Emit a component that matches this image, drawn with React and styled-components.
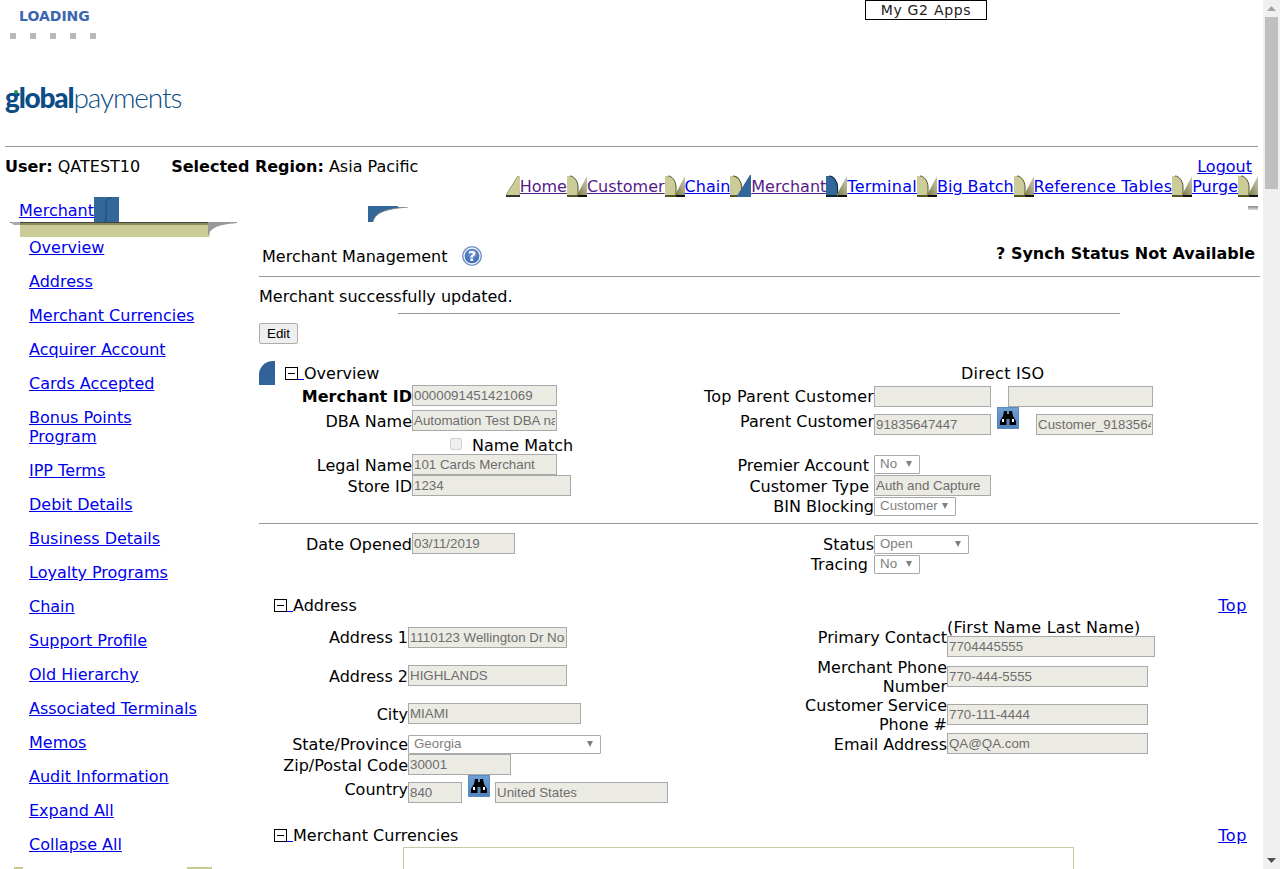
import React from 'react';
import styled, { createGlobalStyle } from 'styled-components';

const GlobalStyle = createGlobalStyle`
  html, body {
    margin: 0;
    padding: 0;
    height: 100%;
    overflow: hidden;
    background: #fff;
  }
  body {
    font-family: 'DejaVu Sans', Verdana, sans-serif;
    font-size: 16px;
    color: #000;
  }
`;

const Shell = styled.div`
  display: flex;
  width: 1280px;
  height: 869px;
  overflow: hidden;
`;

const Page = styled.div`
  width: 1263px;
  padding-left: 5px;
  box-sizing: border-box;
`;

const Scrollbar = styled.div`
  width: 17px;
  background: #f0f0f0;
  display: flex;
  flex-direction: column;
  align-items: center;
`;

const ScrollArrow = styled.div`
  height: 17px;
  width: 17px;
  display: flex;
  align-items: center;
  justify-content: center;
`;

const ScrollThumb = styled.div`
  width: 13px;
  height: 172px;
  background: #c0c0c0;
  margin-bottom: auto;
`;

const TopBar = styled.div`
  height: 85px;
  display: flex;
`;

const Loading = styled.div`
  width: 860px;
`;

const LoadingText = styled.div`
  font-size: 14px;
  font-weight: bold;
  color: #3a66b0;
  padding: 9px 0 0 14px;
  line-height: 14px;
  height: 24px;
`;

const LoadingDots = styled.div`
  display: flex;
  gap: 14px;
  padding-left: 5px;
`;

const Dot = styled.span`
  width: 6px;
  height: 6px;
  background: #b8b8b8;
`;

const AppsButton = styled.div`
  width: 122px;
  height: 20px;
  box-sizing: border-box;
  border: 1px solid #000;
  text-align: center;
  font-size: 14px;
  line-height: 19px;
  color: #222;
  letter-spacing: 0.7px;
`;

const Logo = styled.div`
  position: relative;
  height: 61px;
  font-family: 'Lato', 'Liberation Sans', sans-serif;
  font-size: 28px;
  line-height: 24px;
  color: #0b4c86;
  letter-spacing: -1.1px;
  white-space: nowrap;
`;

const LogoBold = styled.b`
  font-weight: 900;
  letter-spacing: -1.2px;
`;

const LogoLight = styled.span`
  font-weight: 300;
`;

const LogoDot = styled.span`
  position: absolute;
  left: 9px;
  top: 5px;
  width: 4px;
  height: 4px;
  border-radius: 50%;
  background: #1f9a50;
`;

const Rule = styled.div`
  height: 1px;
  background: #999;
  width: ${(p) => p.$w || 1253}px;
  margin-left: ${(p) => p.$ml || 0}px;
`;

const UserBar = styled.div`
  height: 50px;
  display: flex;
  flex-direction: column;
`;

const UserLine = styled.div`
  display: flex;
  height: 18px;
  padding-top: 10px;
  line-height: 19px;
`;

const UserInfo = styled.span`
  margin-right: ${(p) => p.$mr || 0}px;
  b { font-weight: bold; }
`;

const Logout = styled.a`
  margin-left: auto;
  margin-right: 11px;
  color: #00e;
  text-decoration: underline;
`;

const TabRow = styled.div`
  display: flex;
  justify-content: flex-end;
  height: 22px;
  line-height: 24px;
  margin-right: 5px;
`;

const TabLink = styled.a`
  color: ${(p) => (p.$visited ? '#551a8b' : '#00e')};
  text-decoration: underline;
  white-space: nowrap;
  letter-spacing: ${(p) => p.$ls || 0}px;
`;

const Columns = styled.div`
  display: flex;
`;

const Sidebar = styled.div`
  width: 254px;
  flex-shrink: 0;
`;

const SideTab = styled.div`
  display: flex;
  height: 25px;
  padding-left: 14px;
`;

const SideTabLink = styled.a`
  color: #00e;
  text-decoration: underline;
  line-height: 19px;
  padding-top: 4px;
`;

const SideBanner = styled.div`
  height: 15px;
  margin-left: 5px;
`;

const SideList = styled.div`
  padding: 1px 0 0 24px;
  display: flex;
  flex-direction: column;
  gap: 15px;
  width: 172px;
`;

const SideLink = styled.a`
  color: #00e;
  text-decoration: underline;
  line-height: 19px;
`;

const SideFoot = styled.div`
  display: flex;
  margin: 13px 0 0 9px;
`;

const FootChip = styled.span`
  width: ${(p) => p.$w}px;
  height: 3px;
  background: #c9c992;
  margin-right: ${(p) => p.$mr || 0}px;
`;

const Content = styled.div`
  width: 1002px;
`;

const ContentTop = styled.div`
  height: 24px;
  display: flex;
  padding: 9px 3px 0 109px;
  box-sizing: border-box;
  justify-content: space-between;
`;

const GreyDash = styled.span`
  width: 10px;
  height: 4px;
  background: linear-gradient(#888, #ddd);
`;

const TitleRow = styled.div`
  height: 55px;
  box-sizing: border-box;
  display: flex;
  align-items: flex-start;
  padding: 25px 6px 0 3px;
  line-height: 19px;
`;

const Title = styled.span`
  margin: 1px 14px 0 0;
`;

const SyncStatus = styled.b`
  margin: -2px 0 0 auto;
`;

const Message = styled.div`
  height: 36px;
  line-height: 39px;
`;

const EditButton = styled.button`
  display: block;
  width: 39px;
  height: 21px;
  margin: 9px 0 17px;
  padding: 0;
  border: 1px solid #adadad;
  border-radius: 2px;
  background: #efefef;
  font-family: 'Liberation Sans', Arial, sans-serif;
  font-size: 13.33px;
  color: #000;
`;

const SectionHead = styled.div`
  display: flex;
  align-items: center;
  height: ${(p) => p.$h || 24}px;
  padding-left: ${(p) => p.$pl || 0}px;
`;

const BlueCorner = styled.span`
  width: 16px;
  height: 24px;
  margin-right: 10px;
  background: linear-gradient(#2f5f96, #336699);
  border-radius: 14px 0 0 0;
`;

const MinusBox = styled.span`
  width: 11px;
  height: 11px;
  border: 1px solid #000;
  position: relative;
  flex-shrink: 0;
  &::after {
    content: '';
    position: absolute;
    left: 2px;
    right: 2px;
    top: 5px;
    height: 1px;
    background: #000;
  }
`;

const Underscore = styled.span`
  width: 6px;
  height: 13px;
  border-bottom: 1px solid #00e;
`;

const TopLink = styled.a`
  margin-left: auto;
  margin-right: 14px;
  color: #00e;
  text-decoration: underline;
  letter-spacing: 0.6px;
`;

const TwoCols = styled.div`
  display: flex;
`;

const FormCol = styled.div`
  width: ${(p) => p.$w}px;
  flex-shrink: 0;
`;

const Row = styled.div`
  display: flex;
  height: ${(p) => p.$h}px;
`;

const Label = styled.label`
  width: ${(p) => p.$w}px;
  flex-shrink: 0;
  text-align: right;
  line-height: 19px;
  padding: ${(p) => p.$pt || 0}px ${(p) => p.$pr || 0}px 0 ${(p) => p.$pl || 0}px;
  box-sizing: border-box;
  font-weight: ${(p) => (p.$bold ? 'bold' : 'normal')};
  white-space: ${(p) => (p.$wrap ? 'normal' : 'nowrap')};
  letter-spacing: ${(p) => p.$ls || 0}px;
`;

const Field = styled.input`
  display: block;
  width: ${(p) => p.$w}px;
  height: 21px;
  box-sizing: border-box;
  margin: ${(p) => p.$mt || 0}px 0 0 ${(p) => p.$ml || 0}px;
  padding: 0 1px;
  border: 1px solid #a9a9a9;
  background: #ebebe4;
  color: #6d6d6d;
  font-family: 'Liberation Sans', Arial, sans-serif;
  font-size: 13.33px;
  flex-shrink: 0;
`;

const SelectBox = styled.div`
  width: ${(p) => p.$w}px;
  height: 19px;
  box-sizing: border-box;
  margin-top: ${(p) => p.$mt || 0}px;
  padding: 0 0 2px 5px;
  border: 1px solid #a9a9a9;
  border-radius: 1px;
  background: #fff;
  color: #808080;
  font-family: 'Liberation Sans', Arial, sans-serif;
  font-size: 13.33px;
  line-height: 15px;
  display: flex;
  align-items: center;
  justify-content: space-between;
  &::after {
    content: '';
    margin-right: 7px;
    border-left: 3.5px solid transparent;
    border-right: 3.5px solid transparent;
    border-top: 6px solid #808080;
  }
`;

const Lookup = styled.span`
  width: 22px;
  height: 22px;
  margin-left: ${(p) => p.$ml || 0}px;
  flex-shrink: 0;
  background: linear-gradient(#6f9fd4, #4f84bd);
  border: 1px solid #5a8cc4;
  box-sizing: border-box;
  display: flex;
  align-items: center;
  justify-content: center;
`;

const Check = styled.span`
  width: 12px;
  height: 12px;
  margin: 5px 10px 0 38px;
  box-sizing: border-box;
  border: 1px solid #cfcfcf;
  border-radius: 2px;
  background: #efefef;
`;

const Plain = styled.span`
  line-height: 19px;
  margin-left: ${(p) => p.$ml || 0}px;
  padding-top: ${(p) => p.$pt || 0}px;
  white-space: nowrap;
  letter-spacing: ${(p) => p.$ls || 0}px;
`;

const ContactStack = styled.div`
  display: flex;
  flex-direction: column;
  padding-top: 3px;
`;

const CurrencyBox = styled.div`
  width: 671px;
  height: 60px;
  margin: 2px 0 0 144px;
  box-sizing: border-box;
  border: 1px solid #c9c9a5;
`;

const sideItems = [
  'Overview', 'Address', 'Merchant Currencies', 'Acquirer Account', 'Cards Accepted',
  'Bonus Points Program', 'IPP Terms', 'Debit Details', 'Business Details', 'Loyalty Programs',
  'Chain', 'Support Profile', 'Old Hierarchy', 'Associated Terminals', 'Memos',
  'Audit Information', 'Expand All', 'Collapse All',
];

const KHAKI = '#cccc99';
const BLUE = '#336699';

// right edge of one tab and left edge of the next
const TabEdge = ({ kind }) => {
  if (kind === 'start') {
    return (
      <svg width="14" height="22" viewBox="0 0 14 22">
        <path d="M0 20 L12 1 H14 V20 Z" fill={KHAKI} />
        <path d="M0 20 L12 1" stroke="#9a9a66" fill="none" />
        <rect y="20" width="14" height="2" fill="#333" />
      </svg>
    );
  }
  const fromActive = kind === 'fromActive';
  const toActive = kind === 'toActive';
  return (
    <svg width={fromActive || toActive ? 21 : 20} height="22" viewBox="0 0 20 22" preserveAspectRatio="none">
      <defs>
        <linearGradient id="tabFade" x1="0" y1="1" x2="1" y2="0">
          <stop offset="0" stopColor="#77773f" />
          <stop offset="0.55" stopColor="#a9a985" />
          <stop offset="1" stopColor="#c8c8b8" />
        </linearGradient>
      </defs>
      <path d="M0 1 H3 C7 1 11 6 11 12 V20 H0 Z" fill={fromActive ? BLUE : KHAKI} />
      <path d="M3 1 C7 1 11 6 11 12 V20" stroke={fromActive ? '#123' : '#55552a'} fill="none" />
      <rect y="20" width="11" height="2" fill={fromActive ? '#123' : '#55552a'} />
      {toActive ? (
        <path d="M6 22 L19 0 H20 V22 Z" fill={BLUE} />
      ) : (
        <>
          <path d="M10 20 L20 1 V20 Z" fill="url(#tabFade)" />
          <rect x="11" y="20" width="9" height="2" fill="#111" />
        </>
      )}
    </svg>
  );
};

const Binoculars = () => (
  <svg width="16" height="14" viewBox="0 0 16 14">
    <path d="M4 0 H7 V3 H9 V0 H12 L13 5 L16 10 V14 H9.5 V8 H6.5 V14 H0 V10 L3 5 Z" fill="#000" />
    <rect x="2" y="8" width="2" height="3" fill="#fff" />
    <rect x="12" y="8" width="2" height="3" fill="#fff" />
  </svg>
);

const HelpIcon = () => (
  <svg width="20" height="20" viewBox="0 0 20 20">
    <defs>
      <radialGradient id="helpFill" cx="0.5" cy="0.3" r="0.8">
        <stop offset="0" stopColor="#6f98d6" />
        <stop offset="1" stopColor="#2f5ea8" />
      </radialGradient>
    </defs>
    <circle cx="10" cy="10" r="10" fill="#6f8fc0" />
    <circle cx="10" cy="10" r="8" fill="url(#helpFill)" stroke="#eef2fa" strokeWidth="1.3" />
    <text x="10" y="15" textAnchor="middle" fontSize="14" fontWeight="bold" fontFamily="DejaVu Sans" fill="#fff">?</text>
  </svg>
);

const SideBannerArt = () => (
  <svg width="227" height="15" viewBox="0 0 227 15">
    <rect width="227" height="1" y="0" fill="#444" />
    <rect x="10" y="1" width="190" height="2" fill="#8a8a5a" />
    <rect x="10" y="3" width="190" height="12" fill={KHAKI} />
    <path d="M0 0 H10 V3 H4 Z" fill="#aaa" />
    <path d="M198 15 C200 6 206 3 227 1 V0 H198 Z" fill="#999" />
    <path d="M199 15 C201 7 208 4 227 3 V15 Z" fill="#fff" />
  </svg>
);

const App = () => (
  <Shell>
    <GlobalStyle />
    <Page>
      <TopBar>
        <Loading>
          <LoadingText>LOADING</LoadingText>
          <LoadingDots>
            <Dot /><Dot /><Dot /><Dot /><Dot />
          </LoadingDots>
        </Loading>
        <AppsButton>My G2 Apps</AppsButton>
      </TopBar>
      <Logo>
        <LogoBold>global</LogoBold><LogoLight>payments</LogoLight>
        <LogoDot />
      </Logo>
      <Rule />
      <UserBar>
        <UserLine>
          <UserInfo $mr={31}><b>User:</b> QATEST10</UserInfo>
          <UserInfo><b>Selected Region:</b> Asia Pacific</UserInfo>
          <Logout>Logout</Logout>
        </UserLine>
        <TabRow>
          <TabEdge kind="start" />
          <TabLink $visited>Home</TabLink>
          <TabEdge kind="mid" />
          <TabLink $visited>Customer</TabLink>
          <TabEdge kind="mid" />
          <TabLink>Chain</TabLink>
          <TabEdge kind="toActive" />
          <TabLink $visited>Merchant</TabLink>
          <TabEdge kind="fromActive" />
          <TabLink $ls={0.25}>Terminal</TabLink>
          <TabEdge kind="mid" />
          <TabLink>Big Batch</TabLink>
          <TabEdge kind="mid" />
          <TabLink $ls={0.2}>Reference Tables</TabLink>
          <TabEdge kind="mid" />
          <TabLink>Purge</TabLink>
          <TabEdge kind="mid" />
        </TabRow>
      </UserBar>
      <Columns>
        <Sidebar>
          <SideTab>
            <SideTabLink>Merchant</SideTabLink>
            <svg width="25" height="25" viewBox="0 0 25 25">
              <rect width="25" height="25" fill={BLUE} />
              <path d="M10 24 H12 V6 C12 2 14 1 18 1" stroke="#234a70" fill="none" />
            </svg>
          </SideTab>
          <SideBanner><SideBannerArt /></SideBanner>
          <SideList>
            {sideItems.map((item) => (
              <SideLink key={item}>{item}</SideLink>
            ))}
          </SideList>
          <SideFoot>
            <FootChip $w={9} $mr={164} />
            <FootChip $w={25} />
          </SideFoot>
        </Sidebar>
        <Content>
          <ContentTop>
            <svg width="40" height="16" viewBox="0 0 40 16">
              <rect width="40" height="16" fill={BLUE} />
              <path d="M5 16 C7 7 16 3 40 1 V16 Z" fill="#fff" />
              <path d="M5 16 C7 7 16 3 40 1" stroke="#888" fill="none" />
              <rect x="30" width="10" height="1" fill="#fff" />
            </svg>
            <GreyDash />
          </ContentTop>
          <TitleRow>
            <Title>Merchant Management</Title>
            <HelpIcon />
            <SyncStatus>? Synch Status Not Available</SyncStatus>
          </TitleRow>
          <Rule $w={1001} />
          <Message>Merchant successfully updated.</Message>
          <Rule $w={722} $ml={139} />
          <EditButton>Edit</EditButton>

          <TwoCols>
            <FormCol $w={444}>
              <SectionHead>
                <BlueCorner />
                <MinusBox />
                <Underscore />
                <span>Overview</span>
              </SectionHead>
              <Row $h={25}><Label $w={153} $bold $pt={2}>Merchant ID</Label><Field $w={145} readOnly value="0000091451421069" /></Row>
              <Row $h={23}><Label $w={153} $pt={2}>DBA Name</Label><Field $w={145} readOnly value="Automation Test DBA name" /></Row>
              <Row $h={21}><Label $w={153} /><Check /><Plain $pt={3}>Name Match</Plain></Row>
              <Row $h={21}><Label $w={153} $pt={2}>Legal Name</Label><Field $w={145} readOnly value="101 Cards Merchant" /></Row>
              <Row $h={37}><Label $w={153} $pt={2}>Store ID</Label><Field $w={159} readOnly value="1234" /></Row>
            </FormCol>
            <FormCol $w={556}>
              <Row $h={24}><Plain $ml={258} $pt={3} $ls={0.3}>Direct ISO</Plain></Row>
              <Row $h={22}><Label $w={171} $pt={2} $ls={0.2}>Top Parent Customer</Label><Field $w={117} $mt={1} readOnly value="" /><Field $w={145} $mt={1} $ml={17} readOnly value="" /></Row>
              <Row $h={48}><Label $w={171} $pt={5}>Parent Customer</Label><Field $w={117} $mt={7} readOnly value="91835647447" /><Lookup $ml={6}><Binoculars /></Lookup><Field $w={117} $mt={7} $ml={17} readOnly value="Customer_918356474" /></Row>
              <Row $h={20}><Label $w={171} $pr={5} $pt={1}>Premier Account</Label><SelectBox $w={46}>No</SelectBox></Row>
              <Row $h={22}><Label $w={171} $pr={5} $pt={2}>Customer Type</Label><Field $w={117} readOnly value="Auth and Capture" /></Row>
              <Row $h={26}><Label $w={171}>BIN Blocking</Label><SelectBox $w={82}>Customer</SelectBox></Row>
            </FormCol>
          </TwoCols>
          <Rule $w={999} />

          <TwoCols>
            <FormCol $w={444}>
              <Row $h={71}><Label $w={153} $pt={11}>Date Opened</Label><Field $w={103} $mt={9} readOnly value="03/11/2019" /></Row>
            </FormCol>
            <FormCol $w={556}>
              <Row $h={21}><Label $w={171} $pt={11}>Status</Label><SelectBox $w={95} $mt={11}>Open</SelectBox></Row>
              <Row $h={50}><Label $w={171} $pt={10} $pr={6}>Tracing</Label><SelectBox $w={46} $mt={10}>No</SelectBox></Row>
            </FormCol>
          </TwoCols>

          <SectionHead $h={20} $pl={15}>
            <MinusBox />
            <Underscore />
            <span>Address</span>
            <TopLink>Top</TopLink>
          </SectionHead>
          <TwoCols>
            <FormCol $w={444}>
              <Row $h={38}><Label $w={149} $pt={13}>Address 1</Label><Field $w={159} $mt={12} readOnly value="1110123 Wellington Dr North" /></Row>
              <Row $h={38}><Label $w={149} $pt={14}>Address 2</Label><Field $w={159} $mt={12} readOnly value="HIGHLANDS" /></Row>
              <Row $h={32}><Label $w={149} $pt={14}>City</Label><Field $w={173} $mt={12} readOnly value="MIAMI" /></Row>
              <Row $h={31}><Label $w={149} $pt={12}>State/Province</Label><SelectBox $w={193} $mt={12}>Georgia</SelectBox></Row>
              <Row $h={21}><Label $w={149} $pt={2}>Zip/Postal Code</Label><Field $w={103} readOnly value="30001" /></Row>
              <Row $h={50}>
                <Label $w={149} $pt={5}>Country</Label>
                <Field $w={54} $mt={7} readOnly value="840" />
                <Lookup $ml={6}><Binoculars /></Lookup>
                <Field $w={173} $mt={7} $ml={5} readOnly value="United States" />
              </Row>
            </FormCol>
            <FormCol $w={556}>
              <Row $h={38}>
                <Label $w={244} $pt={13}>Primary Contact</Label>
                <ContactStack>
                  <Plain $ls={0.2}>(First Name Last Name)</Plain>
                  <Field $w={208} $mt={-1} readOnly value="7704445555" />
                </ContactStack>
              </Row>
              <Row $h={43}><Label $w={244} $wrap $pl={99} $pt={5}>Merchant Phone Number</Label><Field $w={201} $mt={13} readOnly value="770-444-5555" /></Row>
              <Row $h={37}><Label $w={244} $wrap $pl={99}>Customer Service Phone #</Label><Field $w={201} $mt={8} readOnly value="770-111-4444" /></Row>
              <Row $h={40}><Label $w={244} $pt={2}>Email Address</Label><Field $w={201} readOnly value="QA@QA.com" /></Row>
            </FormCol>
          </TwoCols>
          <SectionHead $h={20} $pl={15}>
            <MinusBox />
            <Underscore />
            <span>Merchant Currencies</span>
            <TopLink>Top</TopLink>
          </SectionHead>
          <CurrencyBox />
        </Content>
      </Columns>
    </Page>
    <Scrollbar>
      <ScrollArrow>
        <svg width="9" height="5" viewBox="0 0 9 5"><path d="M4.5 0 L9 5 H0 Z" fill="#a3a3a3" /></svg>
      </ScrollArrow>
      <ScrollThumb />
      <ScrollArrow>
        <svg width="9" height="5" viewBox="0 0 9 5"><path d="M4.5 5 L9 0 H0 Z" fill="#505050" /></svg>
      </ScrollArrow>
    </Scrollbar>
  </Shell>
);

export default App;
